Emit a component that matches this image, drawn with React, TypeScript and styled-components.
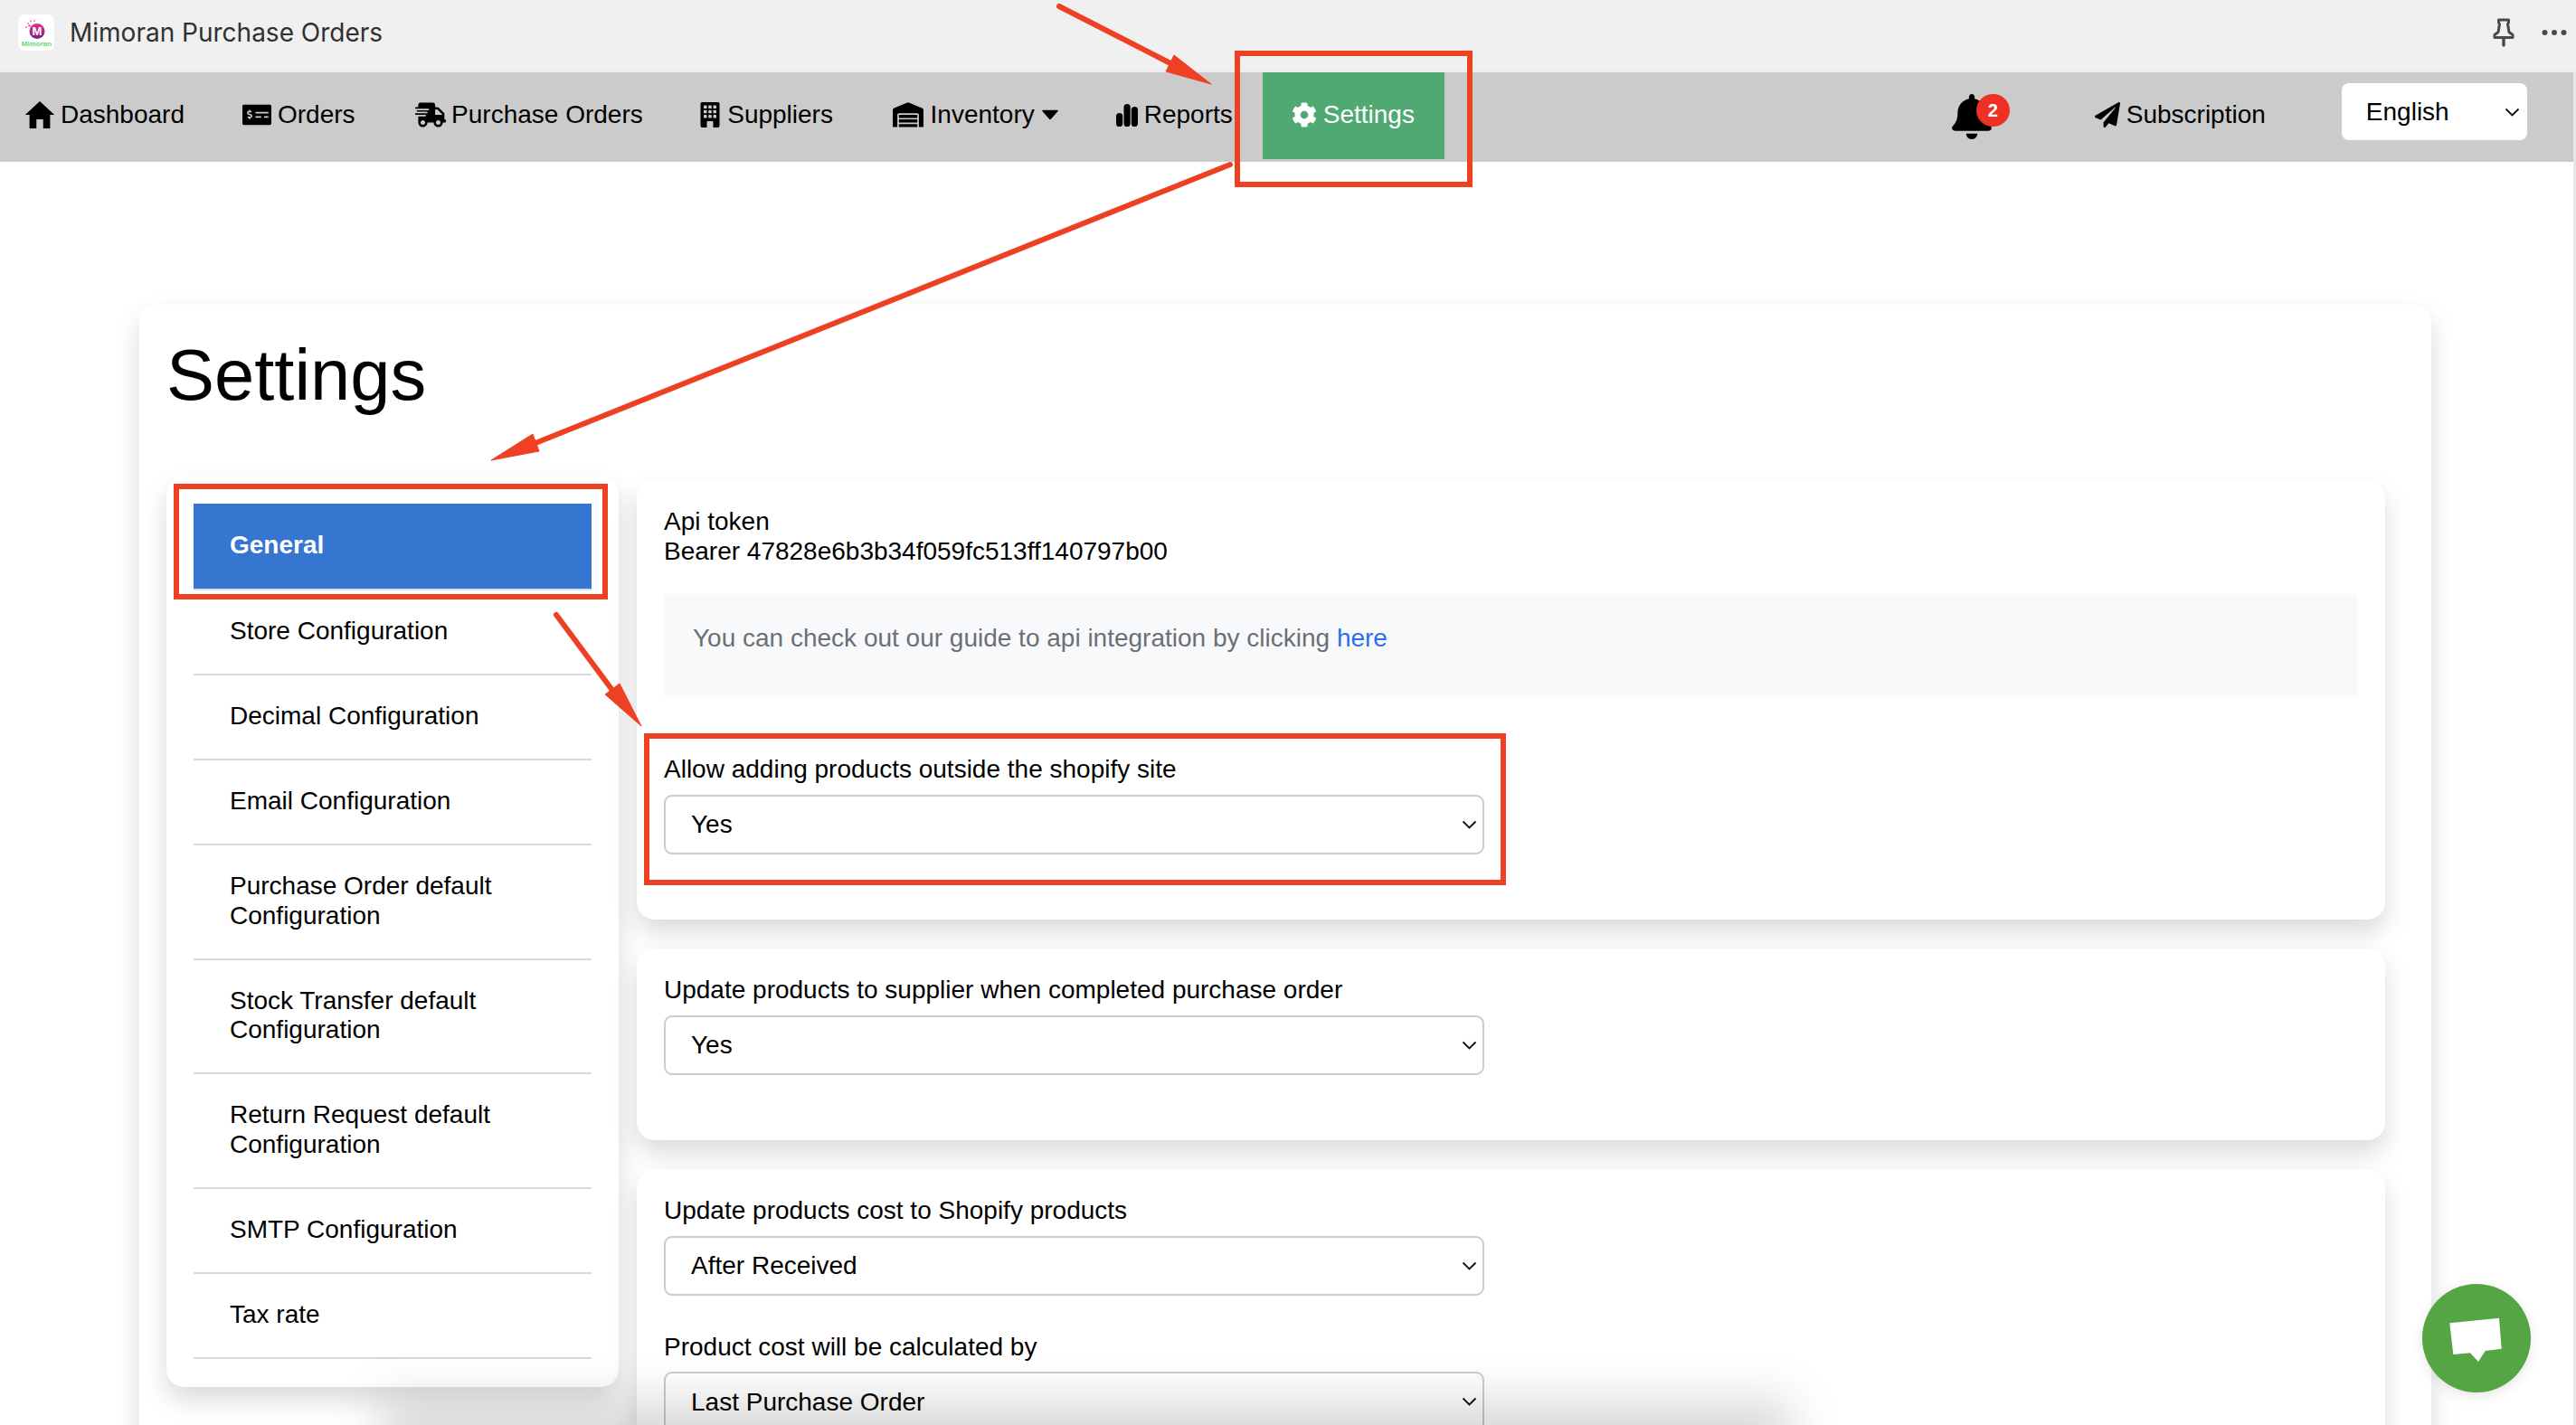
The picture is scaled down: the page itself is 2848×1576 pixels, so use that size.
import React from "react";
import styled, { createGlobalStyle } from "styled-components";
import {
  FaBell,
  FaCog,
  FaMoneyCheckAlt,
  FaPaperPlane,
  FaShippingFast,
  FaWarehouse,
} from "react-icons/fa";
import { BsBuildingFill } from "react-icons/bs";
import { IoMdHome } from "react-icons/io";

const red = "#ee4023";

const GlobalStyle = createGlobalStyle`
  html, body {
    margin: 0;
    padding: 0;
    background: #fff;
  }
  body {
    font-family: "Liberation Sans", Arial, sans-serif;
    color: #000;
  }
`;

const Page = styled.div`
  position: relative;
  width: 2848px;
  height: 1576px;
  overflow: hidden;
  background: #fff;
`;
const TitleBar = styled.div`
  display: flex;
  align-items: center;
  height: 80px;
  padding: 0 10px 6px 20px;
  box-sizing: border-box;
  background: #f0f0f0;
  border-bottom: 2px solid #ececec;
`;
const LogoBox = styled.div`
  width: 40px;
  height: 40px;
  border-radius: 7px;
  background: #fff;
  flex: none;
  svg {
    display: block;
  }
`;
const AppName = styled.div`
  margin-left: 17px;
  font-family: Inter, "Noto Sans", sans-serif;
  font-size: 28px;
  color: #303030;
  flex: 1;
`;
const TitleActions = styled.div`
  display: flex;
  align-items: center;
  gap: 30px;
  color: #4a4a4a;
`;
const Body = styled.div`
  display: flex;
  flex-direction: column;
  border-right: 3px solid #e6e6e6;
  height: 1496px;
`;
const NavBar = styled.nav`
  display: flex;
  align-items: flex-start;
  height: 99px;
  background: #cbcbcb;
  font-size: 28px;
  flex: none;
`;
const NavItem = styled.a<{ $gap?: number; $ml?: number }>`
  display: flex;
  align-items: center;
  gap: ${(p) => p.$gap ?? 8}px;
  height: 94px;
  margin-left: ${(p) => p.$ml ?? 0}px;
  color: #000;
  white-space: nowrap;
  svg {
    flex: none;
  }
`;
const ActiveItem = styled(NavItem)`
  width: 201px;
  height: 96px;
  padding: 0 0 2px 32px;
  box-sizing: border-box;
  background: #50a972;
  color: #fff;
`;
const BellWrap = styled.div`
  position: relative;
  width: 50px;
  height: 50px;
  margin: 24px 0 0 558px;
  svg {
    display: block;
  }
`;
const Badge = styled.span`
  position: absolute;
  top: 0;
  left: 30px;
  width: 37px;
  height: 36px;
  border-radius: 50%;
  background: #ee3124;
  color: #fff;
  font-size: 20px;
  font-weight: bold;
  line-height: 36px;
  text-align: center;
`;
const SelectWrap = styled.div`
  position: relative;
  display: flex;
`;
const LangWrap = styled(SelectWrap)`
  margin: 12px 0 0 84px;
`;
const Chevron = styled.svg`
  position: absolute;
  top: 50%;
  right: 8px;
  width: 17px;
  height: 10px;
  margin-top: -5px;
  pointer-events: none;
`;
const LangSelect = styled.select`
  appearance: none;
  width: 205px;
  height: 63px;
  padding: 0 0 0 27px;
  border: 0;
  border-radius: 8px;
  background: #fff;
  color: #000;
  font: 28px "Liberation Sans", Arial, sans-serif;
`;
const Main = styled.main`
  flex: 1;
  min-height: 0;
  padding: 158px 0 0 154px;
`;
const SettingsCard = styled.section`
  width: 2534px;
  height: 1400px;
  padding: 0 32px 0 30px;
  box-sizing: border-box;
  border-radius: 18px;
  background: #fff;
  box-shadow: 0 14px 28px rgba(0, 0, 0, 0.15);
`;
const Heading = styled.h1`
  margin: 0;
  padding: 30px 0 0;
  height: 190px;
  box-sizing: border-box;
  font-size: 79.5px;
  font-weight: 400;
  line-height: 1.2;
`;
const Columns = styled.div`
  display: flex;
  align-items: flex-start;
  gap: 20px;
`;
const Menu = styled.ul`
  list-style: none;
  flex: none;
  width: 500px;
  margin: 0;
  padding: 30px 30px 31px;
  box-sizing: border-box;
  border-radius: 20px;
  background: #fff;
  box-shadow: 0 14px 28px rgba(0, 0, 0, 0.15);
  font-size: 28px;
  line-height: 32.5px;
`;
const MenuItem = styled.li<{ $active?: boolean }>`
  padding: ${(p) => (p.$active ? "30px 40px 31.5px" : "29px 40px 30.5px")};
  border-bottom: 2px solid ${(p) => (p.$active ? "#cfe0f5" : "#d9d9d9")};
  background: ${(p) => (p.$active ? "#3675d0" : "transparent")};
  color: ${(p) => (p.$active ? "#fff" : "#000")};
  font-weight: ${(p) => (p.$active ? "bold" : "normal")};
`;
const Panels = styled.div`
  display: flex;
  flex-direction: column;
  gap: 32.5px;
  width: 1933px;
  padding-top: 4px;
`;
const Panel = styled.div`
  padding: 30px 30px 72px;
  border-radius: 20px;
  background: #fff;
  box-shadow: 0 14px 28px rgba(0, 0, 0, 0.15);
  font-size: 28px;
  line-height: 32.5px;
`;
const Note = styled.div`
  margin: 31px 0 64px;
  padding: 33px 32px;
  height: 114px;
  box-sizing: border-box;
  background: #f8f9fb;
  color: #6b6f76;
  a {
    color: #2a6fe8;
    text-decoration: none;
  }
`;
const Field = styled.div`
  & + & {
    margin-top: 41px;
  }
`;
const Label = styled.label`
  display: block;
  margin-bottom: 11px;
`;
const FieldWrap = styled(SelectWrap)`
  width: 907px;
`;
const FieldSelect = styled.select`
  appearance: none;
  width: 100%;
  height: 66px;
  padding: 0 0 0 28px;
  border: 2px solid #cccccc;
  border-radius: 9px;
  background: transparent;
  color: #000;
  font: 28px "Liberation Sans", Arial, sans-serif;
`;
const BottomFade = styled.div`
  position: absolute;
  left: 420px;
  top: 1548px;
  width: 1560px;
  height: 90px;
  background: rgba(0, 0, 0, 0.15);
  filter: blur(26px);
  pointer-events: none;
`;
const ChatButton = styled.button`
  position: absolute;
  left: 2678px;
  top: 1420px;
  width: 120px;
  height: 120px;
  padding: 0;
  border: 0;
  border-radius: 50%;
  background: #55a544;
  box-shadow: 0 4px 14px rgba(0, 0, 0, 0.1);
  svg {
    display: block;
  }
`;
const Annotations = styled.svg`
  position: absolute;
  left: 0;
  top: 0;
  pointer-events: none;
`;

const menu = [
  "General",
  "Store Configuration",
  "Decimal Configuration",
  "Email Configuration",
  "Purchase Order default Configuration",
  "Stock Transfer default Configuration",
  "Return Request default Configuration",
  "SMTP Configuration",
  "Tax rate",
];

const SelectChevron = () => (
  <Chevron viewBox="0 0 17 10">
    <path d="M1.5 1.5 L8.5 8.5 L15.5 1.5" fill="none" stroke="#111" strokeWidth="1.8" />
  </Chevron>
);

const SelectField = ({ label, value }: { label: string; value: string }) => (
  <Field>
    <Label>{label}</Label>
    <FieldWrap>
      <FieldSelect defaultValue={value}>
        <option>{value}</option>
      </FieldSelect>
      <SelectChevron />
    </FieldWrap>
  </Field>
);

const Logo = () => (
  <svg width="40" height="40" viewBox="0 0 40 40">
    <defs>
      <linearGradient id="logoGrad" x1="0" y1="0" x2="0" y2="1">
        <stop offset="0" stopColor="#e8308a" />
        <stop offset="1" stopColor="#6e2583" />
      </linearGradient>
    </defs>
    <circle cx="21" cy="18.5" r="8.5" fill="url(#logoGrad)" />
    <circle cx="11" cy="10" r="1" fill="#e87ab0" />
    <circle cx="14" cy="7.5" r="1.1" fill="#e87ab0" />
    <circle cx="9" cy="14" r="1" fill="#e87ab0" />
    <circle cx="12.5" cy="12.5" r="1.3" fill="#e8589c" />
    <circle cx="18" cy="7" r="0.9" fill="#e87ab0" />
    <text x="21" y="23" textAnchor="middle" fontSize="13" fontWeight="bold" fontFamily="Liberation Sans" fill="#fff">
      M
    </text>
    <text x="20.5" y="35" textAnchor="middle" fontSize="8" fontWeight="bold" fontFamily="Liberation Sans" fill="#63d978">
      Mimoran
    </text>
  </svg>
);

const PinIcon = () => (
  <svg width="24" height="32" viewBox="0 0 24 32" fill="none" stroke="#4a4a4a" strokeWidth="3" strokeLinejoin="round">
    <path d="M6.5 2h11v3l-1 1.5 1.5 9 4 3v3H2v-3l4-3 1.5-9-1-1.5z" />
    <path d="M12 22v8" strokeLinecap="round" strokeWidth="3.4" />
  </svg>
);

const DotsIcon = () => (
  <svg width="28" height="8" viewBox="0 0 28 8" fill="#4a4a4a">
    <circle cx="3.5" cy="4" r="3" />
    <circle cx="14" cy="4" r="3" />
    <circle cx="24.5" cy="4" r="3" />
  </svg>
);

const StatsIcon = () => (
  <svg width="24" height="25" viewBox="0 0 24 25" fill="currentColor">
    <rect x="0" y="10" width="7.2" height="15" rx="3.6" />
    <rect x="8.5" y="0" width="7.2" height="25" rx="3.6" />
    <rect x="16.8" y="3" width="7.2" height="22" rx="3.6" />
  </svg>
);

const CaretIcon = () => (
  <svg width="18" height="12" viewBox="0 0 18 12" fill="currentColor">
    <path d="M1 0.8h16a.8.8 0 0 1 .6 1.3L9.6 11a.8.8 0 0 1-1.2 0L.4 2.1A.8.8 0 0 1 1 .8z" />
  </svg>
);

export default function App() {
  return (
    <Page>
      <GlobalStyle />
      <TitleBar>
        <LogoBox>
          <Logo />
        </LogoBox>
        <AppName>Mimoran Purchase Orders</AppName>
        <TitleActions>
          <PinIcon />
          <DotsIcon />
        </TitleActions>
      </TitleBar>
      <Body>
        <NavBar>
          <NavItem $ml={24} $gap={3}>
            <IoMdHome size={40} />
            Dashboard
          </NavItem>
          <NavItem $ml={64} $gap={7}>
            <FaMoneyCheckAlt size={32} />
            Orders
          </NavItem>
          <NavItem $ml={66.5} $gap={6}>
            <FaShippingFast size={34} />
            Purchase Orders
          </NavItem>
          <NavItem $ml={60.5} $gap={5}>
            <BsBuildingFill size={28} />
            Suppliers
          </NavItem>
          <NavItem $ml={65.6} $gap={8}>
            <FaWarehouse size={34} />
            Inventory
            <CaretIcon />
          </NavItem>
          <NavItem $ml={64} $gap={7}>
            <StatsIcon />
            Reports
          </NavItem>
          <ActiveItem $ml={33} $gap={7}>
            <FaCog size={28} />
            Settings
          </ActiveItem>
          <BellWrap>
            <FaBell size={50} />
            <Badge>2</Badge>
          </BellWrap>
          <NavItem $ml={111} $gap={7}>
            <FaPaperPlane size={28} />
            Subscription
          </NavItem>
          <LangWrap>
            <LangSelect defaultValue="English">
              <option>English</option>
            </LangSelect>
            <SelectChevron />
          </LangWrap>
        </NavBar>
        <Main>
          <SettingsCard>
            <Heading>Settings</Heading>
            <Columns>
              <Menu>
                {menu.map((item, i) => (
                  <MenuItem key={item} $active={i === 0}>
                    {item}
                  </MenuItem>
                ))}
              </Menu>
              <Panels>
                <Panel>
                  <div>Api token</div>
                  <div>Bearer 47828e6b3b34f059fc513ff140797b00</div>
                  <Note>
                    You can check out our guide to api integration by clicking <a href="#guide">here</a>
                  </Note>
                  <SelectField label="Allow adding products outside the shopify site" value="Yes" />
                </Panel>
                <Panel>
                  <SelectField label="Update products to supplier when completed purchase order" value="Yes" />
                </Panel>
                <Panel>
                  <SelectField label="Update products cost to Shopify products" value="After Received" />
                  <SelectField label="Product cost will be calculated by" value="Last Purchase Order" />
                </Panel>
              </Panels>
            </Columns>
          </SettingsCard>
        </Main>
      </Body>
      <BottomFade />
      <ChatButton aria-label="Chat">
        <svg width="120" height="120" viewBox="0 0 120 120">
          <path d="M30.3 43.3 85 37.7 87.7 71.7 69.7 74 62 86 53 76.3 34.3 78z" fill="#fff" />
        </svg>
      </ChatButton>
      <Annotations width="2848" height="1576" viewBox="0 0 2848 1576">
        <g fill="none" stroke={red} strokeWidth="6">
          <rect x="1368" y="59" width="257" height="145" />
          <rect x="195" y="538" width="474" height="122" />
          <rect x="715" y="814" width="947" height="162" />
        </g>
        <g fill={red} stroke={red}>
          <path d="M1171 7 1294 70" strokeWidth="6" strokeLinecap="round" />
          <polygon points="1339,93 1298,61 1289,79" />
          <path d="M1360 182 592 490" strokeWidth="6" strokeLinecap="round" />
          <polygon points="543,509 589,480 596,499" />
          <path d="M615 680 682 770" strokeWidth="6" strokeLinecap="round" />
          <polygon points="709,803 685,756 669,768" />
        </g>
      </Annotations>
    </Page>
  );
}
